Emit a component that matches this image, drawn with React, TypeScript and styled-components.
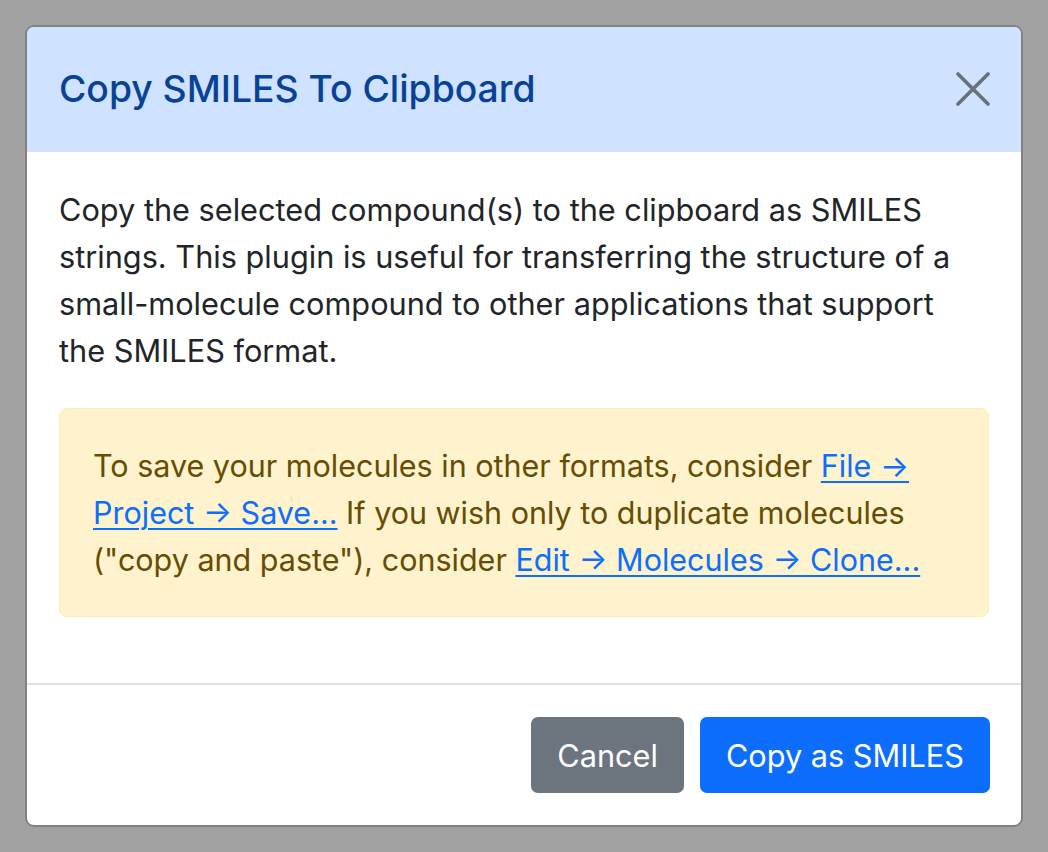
import React from "react";
import styled, { createGlobalStyle } from "styled-components";

const Global = createGlobalStyle`
  html, body { margin: 0; padding: 0; }
  body {
    background: #a2a2a2;
    font-family: Inter, "Noto Sans", "Liberation Sans", sans-serif;
    -webkit-font-smoothing: antialiased;
  }
  * { box-sizing: border-box; }
`;

const Page = styled.div`
  width: 1048px;
  height: 852px;
  padding: 25px;
`;

const Modal = styled.div`
  width: 998px;
  height: 802px;
  background: #fff;
  border: 2px solid #828282;
  border-radius: 9px;
  overflow: hidden;
  display: flex;
  flex-direction: column;
`;

const Header = styled.div`
  height: 125px;
  flex: none;
  background: #cfe2ff;
  border-bottom: 1px solid #dbe3ec;
  display: flex;
  align-items: center;
  justify-content: space-between;
  padding: 0 31px 0 32px;
`;

const Title = styled.h5`
  margin: 0;
  font-size: 37.3px;
  font-weight: 500;
  line-height: 1.2;
  color: #084298;
`;

const CloseButton = styled.button`
  border: 0;
  background: transparent;
  padding: 0;
  width: 34px;
  height: 34px;
  display: flex;
  align-items: center;
  justify-content: center;
  cursor: pointer;
`;

const Body = styled.div`
  flex: 1;
  padding: 34px 32px 0 32px;
`;

const Paragraph = styled.p`
  margin: 0 0 34px;
  padding-right: 10px;
  font-size: 30.7px;
  line-height: 47px;
  color: #212529;
`;

const Alert = styled.div`
  border: 1px solid #ffecb5;
  background: #fff3cd;
  border-radius: 8px;
  padding: 33px 33px;
  font-size: 30.5px;
  line-height: 47px;
  color: #664d03;
`;

const Link = styled.a`
  color: #0d6efd;
  text-decoration: underline;
  text-decoration-thickness: 2px;
  text-underline-offset: 4px;
`;

const Footer = styled.div`
  flex: none;
  height: 142px;
  border-top: 2px solid #dee2e6;
  display: flex;
  align-items: center;
  justify-content: flex-end;
  gap: 16px;
  padding: 0 31px 0 32px;
`;

const Button = styled.button<{ $variant: "secondary" | "primary" }>`
  height: 76px;
  padding: 0 26px;
  border: 0;
  border-radius: 7px;
  font-family: inherit;
  font-size: 30.7px;
  font-weight: 400;
  color: #fff;
  background: ${(p) => (p.$variant === "primary" ? "#0d6efd" : "#6c757d")};
  cursor: pointer;
`;

export default function App() {
  return (
    <>
      <Global />
      <Page>
        <Modal>
          <Header>
            <Title>Copy SMILES To Clipboard</Title>
            <CloseButton aria-label="Close">
              <svg width="34" height="34" viewBox="0 0 34 34">
                <path
                  d="M2 2 L32 32 M32 2 L2 32"
                  stroke="#68717c"
                  strokeWidth="3.6"
                  strokeLinecap="round"
                />
              </svg>
            </CloseButton>
          </Header>
          <Body>
            <Paragraph>
              Copy the selected compound(s) to the clipboard as SMILES strings. This plugin is
              useful for transferring the structure of a small-molecule compound to other
              applications that support the SMILES format.
            </Paragraph>
            <Alert>
              To save your molecules in other formats, consider{" "}
              <Link href="#">File → Project → Save...</Link> If you wish only to duplicate
              molecules ("copy and paste"), consider{" "}
              <Link href="#">Edit → Molecules → Clone...</Link>
            </Alert>
          </Body>
          <Footer>
            <Button $variant="secondary">Cancel</Button>
            <Button $variant="primary">Copy as SMILES</Button>
          </Footer>
        </Modal>
      </Page>
    </>
  );
}
